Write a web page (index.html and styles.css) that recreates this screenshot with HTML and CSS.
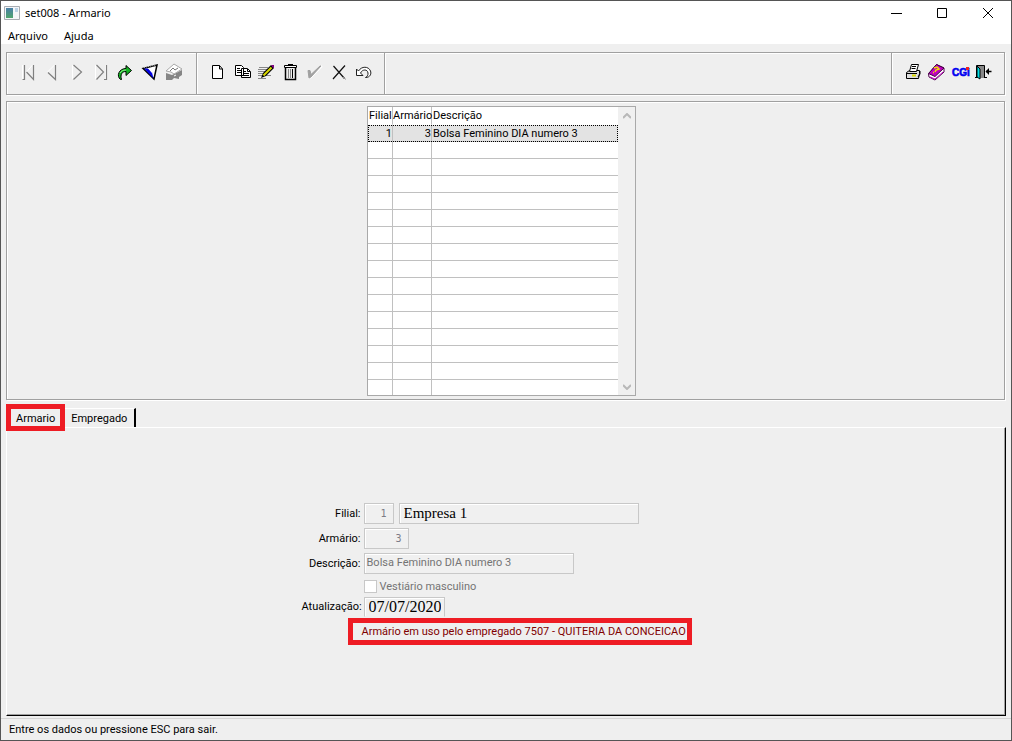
FILE: index.html
```html
<!DOCTYPE html>
<html lang="pt-BR">
<head>
<meta charset="utf-8">
<title>set008 - Armario</title>
<link rel="stylesheet" href="styles.css">
</head>
<body>
<div class="window">
  <header class="titlebar">
    <svg class="app-icon" viewBox="0 0 16 14" width="16" height="14" aria-hidden="true">
      <defs><linearGradient id="g" x1="0" y1="0" x2="0" y2="1"><stop offset="0" stop-color="#4a7fa8"/><stop offset="1" stop-color="#4fa56c"/></linearGradient></defs>
      <path d="M.5.5h15v13H.5z" fill="#f4f6f8" stroke="#a9adb2"/><path d="M2 2h7v10H2z" fill="url(#g)"/><path d="M11 2h3v4h-3z" fill="#bcd3e6"/>
    </svg>
    <h1 class="title">set008 - Armario</h1>
    <div class="window-controls">
      <button aria-label="Minimizar"><svg viewBox="0 0 12 12"><path d="M1 6.500h11"/></svg></button>
      <button aria-label="Maximizar"><svg viewBox="0 0 12 12"><path d="M1.500 1.500h9v9h-9z"/></svg></button>
      <button aria-label="Fechar"><svg viewBox="0 0 12 12"><path d="M1 1l10 10M11 1L1 11"/></svg></button>
    </div>
  </header>
  <nav class="menubar"><button>Arquivo</button><button>Ajuda</button></nav>

  <div class="toolbar">
    <div class="group">
      <button aria-label="Primeiro"><svg viewBox="0 0 24 24"><path class="hi" d="M6.500 5v15M16.500 5l-6 7"/><path class="dim" d="M8.500 5v14.500h-2M10.500 12l7 7.500V5"/></svg></button>
      <button aria-label="Anterior"><svg viewBox="0 0 24 24"><path class="hi" d="M14.500 5l-7 7"/><path class="dim" d="M8 12.500l7.500 7V5"/></svg></button>
      <button aria-label="Próximo"><svg viewBox="0 0 24 24"><path class="hi" d="M8.500 5v14"/><path class="dim" d="M9.500 5l8 7-8 7.500"/></svg></button>
      <button aria-label="Último"><svg viewBox="0 0 24 24"><path class="hi" d="M7.500 5v14M17.500 5v14"/><path class="dim" d="M8.500 5l7 7-7 7.500M16 19.500h2.500V5"/></svg></button>
      <button aria-label="Ir para"><svg viewBox="0 0 24 24"><path d="M8.500 19.500C4 16 7 8.500 14 8.500V5.500l5.500 5-5.500 5v-4c-4 0-6 3-4.500 8z" fill="#14b423" stroke="#000"/><path d="M8 13c1-2 3-3 6-3" fill="none" stroke="#8df08d"/></svg></button>
      <button aria-label="Filtro"><svg viewBox="0 0 24 24"><path d="M7 8.500L21 5l-3 14z" fill="#fff" stroke="#000" stroke-width="1.500"/><path d="M8 8.500h4l4 4 1.500 6z" fill="#0000e0"/><path d="M12 8h7l-3 5z" fill="#fff"/><path d="M8 7.500l12-2.500" stroke="#bbb" stroke-dasharray="1 1"/></svg></button>
      <button aria-label="Etiquetas"><svg viewBox="0 0 24 24"><path d="M6 13l6 2 10-5v5l-3 2v2l-5-1-2 2H6z" fill="#858585"/><path d="M6 11l8-7 8 5-8 5-3-2z" fill="#fff" stroke="#aaa"/><path d="M10 11l3-3 2 2 3-2" fill="none" stroke="#777"/><path d="M14 16l2-1" stroke="#fff"/></svg></button>
    </div>
    <div class="group edit">
      <button aria-label="Novo"><svg viewBox="0 0 24 24"><path d="M7.500 5.500h7l3 3.500v9.500h-10z" fill="#fff" stroke="#000"/><path d="M14.500 5.500V9h3" fill="none" stroke="#000"/></svg></button>
      <button aria-label="Copiar"><svg viewBox="0 0 24 24"><path d="M6.500 5.500h6l2 2v8h-8zM12.500 8.500h6l3 3v6h-9z" fill="#fff" stroke="#000"/><path d="M8 8.500h3M8 10.500h4M8 12.500h4M14 11.500h3M14 13.500h6M14 15.500h6M18.500 9v2.500H21" fill="none" stroke="#000"/></svg></button>
      <button aria-label="Editar"><svg viewBox="0 0 24 24"><path d="M6 7.500h9M5 9.500h9M5 11.500h7M5 13.500h6M5 15.500h13M5 18.500h8" stroke="#888"/><path d="M8 18l2-5 8-8 3 3-8 8z" fill="#000"/><path d="M10.500 15.500l8-8" stroke="#d9d900" stroke-width="2"/><path d="M18 5h3v3h-1z" fill="#800080"/></svg></button>
      <button aria-label="Excluir"><svg viewBox="0 0 24 24"><path d="M8.500 8v11.500h10V8" fill="#eee" stroke="#000" stroke-width="1.500"/><path d="M7.500 5.500h12v2h-12zM11 4.500h5" fill="#fff" stroke="#000"/><path d="M11.500 9v9M13.500 9v9" stroke="#888"/><path d="M15.500 9v9" stroke="#000"/></svg></button>
      <button aria-label="Confirmar"><svg viewBox="0 0 24 24"><path d="M9 18l12-12" fill="none" stroke="#fff" stroke-width="2"/><path d="M7 10.500h2l1 4L19 6l1 0-10 11-2 1z" fill="#a0a0a0" stroke="#a0a0a0"/></svg></button>
      <button aria-label="Cancelar"><svg viewBox="0 0 24 24"><path d="M8.500 6l11 12.500M20 5.500L8 19" stroke="#111" stroke-width="1.200"/><path d="M18 17l3 2.500" stroke="#999"/></svg></button>
      <button aria-label="Desfazer"><svg viewBox="0 0 24 24"><path d="M7.500 9v6.500H14L11.500 13c2-4 7-4 7.500 0 .3 2-1 4-2.500 4.500 5 0 6-4 5-6.500-2-5-9-5-12 0z" fill="#fff" stroke="#222"/></svg></button>
    </div>
    <div class="group spacer"></div>
    <div class="group end">
      <button aria-label="Imprimir"><svg viewBox="0 0 24 24"><path d="M6.500 12.500l3-2h10v3l-1 5h-12z" fill="#ddd" stroke="#000"/><path d="M9.500 11.500l2-7h7l-2 7z" fill="#fff" stroke="#000"/><path d="M12 6.500h4M11.500 8.500h4M7 13.500h10M8 18.500h9M18 17l2-3v-3" fill="none" stroke="#000"/><path d="M12 15.500h4" stroke="#d9d900" stroke-width="2"/></svg></button>
      <button aria-label="Ajuda"><svg viewBox="0 0 24 24"><path d="M4.500 14l8-9.500L20 8v4l-9 8-6-3z" fill="#fff" stroke="#500050"/><path d="M4.500 13.500l8-9L20 8l-9 8.500z" fill="#c000c0" stroke="#400040"/><path d="M10 8l3-1 2 2-3 1-1 2M9 12.500h1" fill="none" stroke="#f0e000" stroke-width="1.500"/><path d="M6 17l5 2 8-7" fill="none" stroke="#c000c0"/></svg></button>
      <button aria-label="CGI"><svg viewBox="0 0 24 24"><text class="cgi" x="4" y="16">CGi</text><path d="M18 7h3v3h-3z" fill="#f02020"/></svg></button>
      <button aria-label="Sair"><svg viewBox="0 0 24 24"><path d="M4.500 18V5.500h8V18M3 17.500h3M12 17.500h3" fill="#888" stroke="#000"/><path d="M5 6l3 3v10l-3-2z" fill="#00e0e8" stroke="#000"/><path d="M14 11.500h5.500" stroke="#000" stroke-width="1.500"/><path d="M17 8v7l-3.500-3.500z"/></svg></button>
    </div>
  </div>

  <main class="content">
    <section class="list-panel">
      <div class="listbox">
        <div class="rows">
          <table>
            <colgroup><col class="c-filial"><col class="c-armario"><col></colgroup>
            <thead><tr><th>Filial</th><th>Armário</th><th>Descrição</th></tr></thead>
            <tbody>
              <tr class="selected"><td>1</td><td>3</td><td>Bolsa Feminino DIA numero 3</td></tr>
              <tr><td></td><td></td><td></td></tr><tr><td></td><td></td><td></td></tr><tr><td></td><td></td><td></td></tr>
              <tr><td></td><td></td><td></td></tr><tr><td></td><td></td><td></td></tr><tr><td></td><td></td><td></td></tr>
              <tr><td></td><td></td><td></td></tr><tr><td></td><td></td><td></td></tr><tr><td></td><td></td><td></td></tr>
              <tr><td></td><td></td><td></td></tr><tr><td></td><td></td><td></td></tr><tr><td></td><td></td><td></td></tr>
              <tr><td></td><td></td><td></td></tr><tr><td></td><td></td><td></td></tr><tr><td></td><td></td><td></td></tr>
            </tbody>
          </table>
        </div>
        <div class="scrollbar">
          <button aria-label="Rolar para cima"><svg viewBox="0 0 8 6"><path d="M0 5l4-4 4 4"/></svg></button>
          <button aria-label="Rolar para baixo"><svg viewBox="0 0 8 6"><path d="M0 1l4 4 4-4"/></svg></button>
        </div>
      </div>
    </section>

    <div class="tabs" role="tablist">
      <button class="tab active" role="tab" aria-selected="true">Armario</button>
      <button class="tab" role="tab" aria-selected="false">Empregado</button>
    </div>

    <section class="page">
      <form class="form">
        <label for="filial">Filial:</label>
        <div class="fields"><input id="filial" class="code narrow" value="1" disabled><input class="serif company" aria-label="Empresa" value="Empresa 1" readonly></div>
        <label for="armario">Armário:</label>
        <div class="fields"><input id="armario" class="code" value="3" disabled></div>
        <label for="descricao">Descrição:</label>
        <div class="fields"><input id="descricao" class="description" value="Bolsa Feminino DIA numero 3" disabled></div>
        <div class="fields check"><input type="checkbox" id="vestiario" disabled><label for="vestiario">Vestiário masculino</label></div>
        <label for="data">Atualização:</label>
        <div class="fields"><input id="data" class="serif date" value="07/07/2020" readonly></div>
        <p class="notice">Armário em uso pelo empregado 7507 - QUITERIA DA CONCEICAO</p>
      </form>
    </section>
  </main>
  <footer class="status">Entre os dados ou pressione ESC para sair.</footer>
</div>
</body>
</html>
```
FILE: styles.css
```css
* { box-sizing: border-box; }
body { margin: 0; font-family: Roboto, "Liberation Sans", sans-serif; font-size: 11px; color: #000; }
button, input { font: inherit; color: inherit; margin: 0; padding: 0; border: 0; background: none; border-radius: 0; }
svg { display: block; }

.window { display: flex; flex-direction: column; min-height: 100vh; border: 1px solid #555; background: #efefef; }

.titlebar { display: flex; align-items: center; height: 24px; padding-left: 3px; background: #fff; }
.title { flex: 1; margin: 0 0 0 5px; padding-bottom: 1px; font: 11px "Noto Sans", sans-serif; }
.window-controls { display: flex; }
.window-controls button { display: flex; align-items: center; justify-content: center; width: 46px; height: 24px; }
.window-controls svg { width: 12px; height: 12px; fill: none; stroke: #000; }
.menubar { display: flex; gap: 16px; height: 19px; padding: 1px 0 0 7px; background: #fff; font: 11px "Noto Sans", sans-serif; }

.toolbar { display: flex; height: 43px; margin: 8px 6px 0 5px; border: 1px solid #a0a0a0; box-shadow: 1px 1px 0 #fff, inset 1px 1px 0 #fff; }
.group { display: flex; align-items: center; width: 190px; padding: 0 0 3px 9px; border-right: 1px solid #a0a0a0; box-shadow: 1px 0 0 #fff; }
.group.edit { width: 188px; padding-left: 8px; }
.group.spacer { flex: 1; }
.group.end { width: 112px; padding-left: 8px; border-right: 0; box-shadow: none; }
.group button { width: 24px; height: 24px; }
.group svg { width: 24px; height: 24px; }
.hi { fill: none; stroke: #fff; }
.dim { fill: none; stroke: #808080; stroke-width: 1.2px; }
.cgi { font: bold 10px "Liberation Sans", sans-serif; fill: #0000f0; stroke: #0000f0; stroke-width: .6px; }

.content { flex: 1; display: flex; flex-direction: column; margin: 6px 5px 0; }
.list-panel { display: flex; justify-content: center; margin-right: 1px; padding: 4px 8px 3px 0; border: 1px solid #a0a0a0; box-shadow: 1px 1px 0 #fff, inset 1px 1px 0 #fff; }
.listbox { display: flex; width: 269px; height: 290px; border: 1px solid #a9a9a9; background: #fff; }
.rows { flex: 1; height: 288px; overflow: hidden; }
table { width: 100%; table-layout: fixed; border-collapse: separate; border-spacing: 0; }
.c-filial { width: 25px; }
.c-armario { width: 39px; }
th, td { height: 17px; padding: 1px 1px 0; line-height: 15px; text-align: left; font-weight: normal; white-space: nowrap; border-right: 1px solid #c0c0c0; border-bottom: 1px solid #c0c0c0; }
th { height: 18px; padding: 1px 0 0; line-height: 16px; border-bottom-color: #fff; }
th:first-child, th:last-child { padding-left: 1px; }
th:last-child, td:last-child { border-right: 0; }
td:nth-child(-n+2) { text-align: right; padding-right: 0; }
.selected { background: #e3e3e3; outline: 1px dotted #000; outline-offset: -1px; }
.scrollbar { display: flex; flex-direction: column; justify-content: space-between; width: 17px; background: #f0f0f0; }
.scrollbar button { display: flex; align-items: center; justify-content: center; height: 17px; }
.scrollbar svg { width: 8px; height: 6px; fill: none; stroke: #b8b8b8; stroke-width: 2; }

.tabs { display: flex; align-items: flex-start; height: 27px; margin-top: 4px; z-index: 1; }
.tab { height: 19px; margin-top: 4px; padding: 1px 7px 0 6px; border-top: 1px solid #fff; border-right: 2px solid #000; }
.tab.active { height: 27px; margin-top: 0; padding: 1px 5px 0; border: 5px solid #ee1c24; }
.page { flex: 1; display: flex; align-items: center; justify-content: center; margin-top: -4px; padding: 4px 2px 0 0; border: 1px solid; border-color: #fff #000 #000 #fff; box-shadow: inset -1px -1px 0 #a0a0a0; }

.form { display: grid; grid-template-columns: 59px 345px; column-gap: 3px; row-gap: 4px; align-items: center; }
.form > label { text-align: right; }
.fields { grid-column: 2; display: flex; gap: 5px; }
.fields input { height: 21px; border: 1px solid #c8c8c8; box-shadow: inset 1px 1px 0 #fff; background: #f0f0f0; }
.fields .code { width: 45px; padding-right: 6px; text-align: right; font: 10px "DejaVu Sans Mono", monospace; color: #7c7c86; }
.fields .narrow { width: 30px; }
.fields .serif { padding: 0 3px 0 4px; font: 16px "Liberation Serif", "Times New Roman", serif; }
.fields .company { width: 240px; font-size: 15px; }
.fields .description { width: 210px; padding: 0 2px 2px; color: #747474; }
.fields .date { width: 81px; height: 20px; border-bottom-color: #efefef; }
.check { align-items: center; gap: 3px; padding: 2px 0 0; color: #747474; }
.check input { appearance: none; width: 13px; height: 13px; background: #fff; }
.notice { grid-column: 2; width: 344px; height: 27px; margin: -3px 0 0 -16px; padding-left: 9px; border: 5px solid #ee1c24; line-height: 18px; white-space: nowrap; color: #800000; }

.status { height: 22px; margin-top: 2px; padding: 0 8px; border-top: 1px solid #d5d5d5; line-height: 21px; }
```
